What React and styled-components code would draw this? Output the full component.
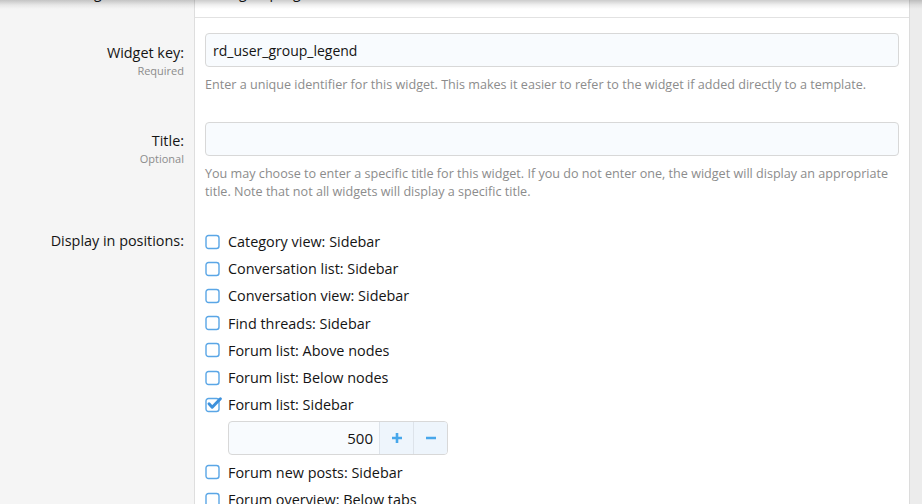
import React from "react";
import styled, { createGlobalStyle } from "styled-components";

const Global = createGlobalStyle`
  html, body { margin: 0; padding: 0; background: #ececec; }
  body { font-family: "Open Sans", "Noto Sans", sans-serif; color: #141414; }
  * { box-sizing: border-box; }
`;

const Page = styled.div`
  position: relative;
  width: 922px;
  height: 504px;
  overflow: hidden;
  display: flex;
`;

const Block = styled.div`
  width: 910px;
  background: #fff;
  border-right: 1px solid #dcdcdc;
  display: flex;
  flex-direction: column;
`;

const TopShadow = styled.div`
  position: absolute;
  left: 0;
  top: 0;
  width: 922px;
  height: 9px;
  background: linear-gradient(to bottom, rgba(0,0,0,0.2), rgba(0,0,0,0.06) 55%, rgba(0,0,0,0));
  pointer-events: none;
`;

const Row = styled.div`
  display: grid;
  grid-template-columns: 195px 1fr;
`;

const LabelCell = styled.div`
  background: #f5f5f5;
  border-right: 1px solid #dedede;
  padding: ${(p) => p.$pt || 0}px 10px 0 10px;
  text-align: right;
`;

const ControlCell = styled.div`
  padding: ${(p) => p.$pt || 0}px 10px ${(p) => p.$pb || 0}px 10px;
  ${(p) => p.$line && "border-bottom: 1px solid #e2e2e2;"}
  ${(p) => p.$clip && "height: 18px; overflow: hidden;"}
`;

const ClipText = styled.div`
  margin-top: -17px;
  font-size: 14px;
  line-height: 20px;
  color: #141414;
`;

const LabelClip = styled.div`
  height: 18px;
  overflow: hidden;
`;

const Label = styled.div`
  font-size: 14.4px;
  line-height: 20px;
  color: #141414;
`;

const SubLabel = styled.div`
  font-size: 11px;
  line-height: 15px;
  color: #8c8c8c;
  margin-top: 0;
`;

const TextInput = styled.div`
  height: 34px;
  border: 1px solid #d8d8d8;
  border-radius: 4px;
  background: #f8fbfe;
  padding: 0 7px;
  display: flex;
  align-items: center;
  font-size: 14px;
  color: #141414;
`;

const Hint = styled.div`
  margin-top: 9px;
  font-size: 12.6px;
  line-height: 18px;
  color: #8c8c8c;
`;

const CheckList = styled.ul`
  list-style: none;
  margin: 0;
  padding: 0;
`;

const CheckItem = styled.li`
  display: flex;
  align-items: center;
  height: 27.2px;
  font-size: 14.4px;
  color: #141414;
`;

const Box = styled.span`
  width: 23px;
  height: 16px;
  flex: none;
  display: flex;
  align-items: center;
`;

const Sub = styled.div`
  margin: 2.2px 0 4.4px 23px;
  width: 220px;
  height: 34px;
  display: flex;
  border: 1px solid #d8d8d8;
  border-radius: 4px;
  background: #f8fbfe;
  overflow: hidden;
`;

const NumField = styled.div`
  flex: 1;
  display: flex;
  align-items: center;
  justify-content: flex-end;
  padding-right: 6px;
  font-size: 15px;
  color: #141414;
`;

const NumBtn = styled.div`
  width: 34px;
  flex: none;
  display: flex;
  align-items: center;
  justify-content: center;
  border-left: 1px solid #dde3ea;
  background: #eef5fc;
  color: #47a7eb;
`;

function CheckIcon({ checked }) {
  return (
    <svg width="17" height="16" viewBox="0 0 17 16" style={{ overflow: "visible" }}>
      <rect x="1" y="1.5" width="13" height="13" rx="2.5" fill="#fff" stroke="#5aa6e6" strokeWidth="1.4" />
      {checked && (
        <path d="M4 6.8 L7.2 10.2 L15.4 1.8" fill="none" stroke="#3d91dc" strokeWidth="3" strokeLinecap="round" strokeLinejoin="round" />
      )}
    </svg>
  );
}

const positions = [
  "Category view: Sidebar",
  "Conversation list: Sidebar",
  "Conversation view: Sidebar",
  "Find threads: Sidebar",
  "Forum list: Above nodes",
  "Forum list: Below nodes",
  "Forum list: Sidebar",
  "Forum new posts: Sidebar",
  "Forum overview: Below tabs",
];

export default function App() {
  return (
    <>
      <Global />
      <Page>
        <Block>
          <Row>
            <LabelCell>
              <LabelClip>
                <ClipText>Widget definition:</ClipText>
              </LabelClip>
            </LabelCell>
            <ControlCell $line $clip>
              <ClipText>User group legend</ClipText>
            </ControlCell>
          </Row>
          <Row>
            <LabelCell $pt={25}>
              <Label>Widget key:</Label>
              <SubLabel>Required</SubLabel>
            </LabelCell>
            <ControlCell $pt={15} $pb={14}>
              <TextInput>rd_user_group_legend</TextInput>
              <Hint>Enter a unique identifier for this widget. This makes it easier to refer to the widget if added directly to a template.</Hint>
            </ControlCell>
          </Row>
          <Row>
            <LabelCell $pt={23}>
              <Label>Title:</Label>
              <SubLabel>Optional</SubLabel>
            </LabelCell>
            <ControlCell $pt={14} $pb={14}>
              <TextInput />
              <Hint>
                You may choose to enter a specific title for this widget. If you do not enter one, the widget will display an appropriate title. Note that not all widgets will display a specific title.
              </Hint>
            </ControlCell>
          </Row>
          <Row>
            <LabelCell $pt={16}>
              <Label>Display in positions:</Label>
            </LabelCell>
            <ControlCell $pt={13}>
              <CheckList>
                {positions.map((p, i) => (
                  <React.Fragment key={p}>
                    <CheckItem>
                      <Box>
                        <CheckIcon checked={i === 6} />
                      </Box>
                      {p}
                    </CheckItem>
                    {i === 6 && (
                      <Sub>
                        <NumField>500</NumField>
                        <NumBtn>
                          <svg width="12" height="12" viewBox="0 0 12 12">
                            <path d="M6 1v10M1 6h10" stroke="currentColor" strokeWidth="2.6" />
                          </svg>
                        </NumBtn>
                        <NumBtn>
                          <svg width="12" height="12" viewBox="0 0 12 12">
                            <path d="M1 6h10" stroke="currentColor" strokeWidth="2.6" />
                          </svg>
                        </NumBtn>
                      </Sub>
                    )}
                  </React.Fragment>
                ))}
              </CheckList>
            </ControlCell>
          </Row>
        </Block>
        <TopShadow />
      </Page>
    </>
  );
}
